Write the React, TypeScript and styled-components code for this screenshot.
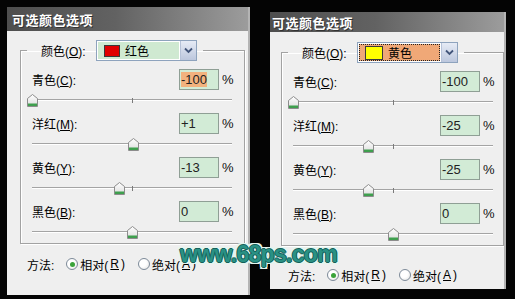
import React from "react";
import styled, { createGlobalStyle } from "styled-components";

const GlobalStyle = createGlobalStyle`
  html, body {
    margin: 0;
    padding: 0;
    background: #000;
  }
  body {
    width: 515px;
    height: 299px;
    overflow: hidden;
    font-family: "Liberation Sans", "Noto Sans CJK SC", sans-serif;
  }
`;

const cjk = `"Liberation Sans", "Noto Sans CJK SC", sans-serif`;

const Stage = styled.div`
  position: relative;
  width: 515px;
  height: 299px;
  box-sizing: border-box;
  padding: 7px 0 0 7px;
  display: flex;
  align-items: flex-start;
  gap: 20px;
  background: #040404;
  overflow: hidden;
`;

const Panel = styled.section<{ $w: number; $h: number; $mt: number }>`
  width: ${(p) => p.$w}px;
  height: ${(p) => p.$h}px;
  margin-top: ${(p) => p.$mt}px;
  flex: none;
  display: flex;
  flex-direction: column;
  background: #efefef;
  border-right: 2px solid #b4b4b4;
  box-sizing: border-box;
  overflow: hidden;
`;

const TitleBar = styled.div<{ $h: number; $pl: number }>`
  height: ${(p) => p.$h}px;
  padding-left: ${(p) => p.$pl}px;
  display: flex;
  align-items: center;
  background: linear-gradient(to right, #4e4e4e 0%, #626262 45%, #9c9c9c 100%);
  color: #fff;
  font: bold 13px ${cjk};
  letter-spacing: 0.5px;
  text-shadow: 1px 1px 0 #333;
  flex: none;
`;

const Body = styled.div<{ $pt: number; $pl: number; $pr: number }>`
  padding: ${(p) => p.$pt}px ${(p) => p.$pr}px 0 ${(p) => p.$pl}px;
  display: flex;
  flex-direction: column;
`;

const GroupBox = styled.fieldset<{ $pr: number }>`
  margin: 0;
  padding: 8px ${(p) => p.$pr}px 3px 11px;
  min-width: 0;
  border: 1px solid #a2a2a2;
  box-shadow: 1px 1px 0 #fff, inset 1px 1px 0 #fff;
  display: flex;
  flex-direction: column;
  gap: 5px;
`;

const Legend = styled.legend`
  margin-left: -5px;
  padding: 0 6px 0 14px;
  display: flex;
  align-items: center;
  height: 21px;
`;

const LegendLabel = styled.span`
  width: 55px;
  font-size: 12px;
  color: #000;
`;

const Combo = styled.div`
  width: 101px;
  height: 21px;
  box-sizing: border-box;
  border: 1px solid #8ea3bd;
  display: flex;
  background: #fff;
`;

const ComboValue = styled.div<{ $fill: string; $focus: boolean }>`
  flex: 1;
  margin: 1px;
  display: flex;
  align-items: center;
  gap: 5px;
  padding-left: 6px;
  background: ${(p) => p.$fill};
  outline: ${(p) => (p.$focus ? "1px dotted #222" : "none")};
  outline-offset: -1px;
  font-size: 12px;
  color: #000;
`;

const Swatch = styled.span<{ $c: string; $w: number; $h: number }>`
  width: ${(p) => p.$w}px;
  height: ${(p) => p.$h}px;
  box-sizing: border-box;
  background: ${(p) => p.$c};
  border: 1px solid #3a3a3a;
`;

const ComboButton = styled.div`
  width: 15px;
  display: flex;
  align-items: center;
  justify-content: center;
  background: linear-gradient(to bottom, #e6ebf5, #bcc7dd);
  border-left: 1px solid #b6c2d8;
`;

const Block = styled.div`
  display: flex;
  flex-direction: column;
`;

const ParamRow = styled.div`
  height: 21px;
  display: flex;
  align-items: center;
`;

const ParamLabel = styled.span`
  flex: 1;
  font-size: 12px;
  color: #000;
`;

const ValueBox = styled.div`
  width: 40px;
  height: 21px;
  box-sizing: border-box;
  border: 1px solid #8f9f95;
  background: #d2ebd6;
  display: flex;
  align-items: center;
  padding-left: 1px;
  font: 13px "Liberation Sans", sans-serif;
  color: #222;
`;

const Selected = styled.span`
  background: #f2b27e;
`;

const Percent = styled.span`
  width: 10px;
  margin-left: 3px;
  font: 13px "Liberation Sans", sans-serif;
  color: #111;
  white-space: nowrap;
`;

const SliderBox = styled.div`
  position: relative;
  height: 16px;
  margin-top: 2px;
  display: flex;
  align-items: center;
`;

const Track = styled.div`
  width: 100%;
  height: 0;
  border-top: 1px solid #a4a4a4;
  border-bottom: 1px solid #fff;
`;

const Tick = styled.span`
  position: absolute;
  left: 50%;
  top: 6px;
  width: 1px;
  height: 5px;
  background: #7a7a7a;
`;

const Thumb = styled.svg`
  position: absolute;
  top: 2px;
  width: 11px;
  height: 13px;
`;

const MethodRow = styled.div<{ $mt: number }>`
  margin-top: ${(p) => p.$mt}px;
  margin-left: 7px;
  height: 16px;
  display: flex;
  align-items: center;
  font-size: 12px;
  color: #000;
`;

const MethodLabel = styled.span`
  margin-right: 12px;
`;

const RadioItem = styled.label`
  display: flex;
  align-items: center;
  gap: 2px;
  margin-right: 13px;
`;

const RadioCircle = styled.span<{ $on: boolean }>`
  width: 12px;
  height: 12px;
  box-sizing: border-box;
  border-radius: 50%;
  border: 1px solid #7d8a99;
  background: radial-gradient(circle at 40% 40%, #fff 40%, #dedede 100%);
  display: flex;
  align-items: center;
  justify-content: center;
  &::after {
    content: "";
    width: 5px;
    height: 5px;
    border-radius: 50%;
    background: ${(p) => (p.$on ? "#3aa33a" : "transparent")};
  }
`;

const U = styled.span`
  text-decoration: underline;
`;

const Watermark = styled.div`
  position: absolute;
  left: 180px;
  top: 243px;
  font: bold 23px/23px "Liberation Sans", sans-serif;
  letter-spacing: -0.7px;
  color: #2a9184;
  white-space: nowrap;
  text-shadow: 1px 0 0 #14605a, -1px 0 0 #14605a, 0 1px 0 #14605a,
    0 -1px 0 #14605a, 2px 0 0 #e4f6ef, -2px 0 0 #e4f6ef, 0 2px 0 #e4f6ef,
    0 -2px 0 #e4f6ef, 2px 2px 0 #e4f6ef, -2px -2px 0 #e4f6ef,
    2px -2px 0 #e4f6ef, -2px 2px 0 #e4f6ef;
`;

interface Param {
  name: string;
  key: string;
  value: number;
  selected?: boolean;
}

interface PanelSpec {
  width: number;
  height: number;
  top: number;
  titleH: number;
  titlePad: number;
  bodyTop: number;
  bodyLeft: number;
  bodyRight: number;
  groupRight: number;
  fill: string;
  focus: boolean;
  swatch: string;
  swatchW: number;
  swatchH: number;
  colorName: string;
  methodGap: number;
  params: Param[];
}

const panels: PanelSpec[] = [
  {
    width: 243,
    height: 288,
    top: 0,
    titleH: 24,
    titlePad: 5,
    bodyTop: 9,
    bodyLeft: 13,
    bodyRight: 3,
    groupRight: 12,
    fill: "#cfe9d1",
    focus: false,
    swatch: "#e00000",
    swatchW: 16,
    swatchH: 12,
    colorName: "红色",
    methodGap: 12,
    params: [
      { name: "青色", key: "C", value: -100, selected: true },
      { name: "洋红", key: "M", value: 1 },
      { name: "黄色", key: "Y", value: -13 },
      { name: "黑色", key: "B", value: 0 },
    ],
  },
  {
    width: 236,
    height: 277,
    top: 5,
    titleH: 20,
    titlePad: 2,
    bodyTop: 10,
    bodyLeft: 11,
    bodyRight: 0,
    groupRight: 10,
    fill: "#f0a877",
    focus: true,
    swatch: "#ffff00",
    swatchW: 18,
    swatchH: 14,
    colorName: "黄色",
    methodGap: 21,
    params: [
      { name: "青色", key: "C", value: -100 },
      { name: "洋红", key: "M", value: -25 },
      { name: "黄色", key: "Y", value: -25 },
      { name: "黑色", key: "B", value: 0 },
    ],
  },
];

const formatValue = (v: number) => (v > 0 ? `+${v}` : `${v}`);

const Slider = ({ value }: { value: number }) => {
  const pct = ((value + 100) / 200) * 100;
  return (
    <SliderBox>
      <Track />
      <Tick />
      <Thumb viewBox="0 0 11 13" style={{ left: `calc(${pct}% - 5px)` }}>
        <defs>
          <linearGradient id="thumbFill" x1="0" y1="0" x2="0" y2="1">
            <stop offset="0" stopColor="#ffffff" />
            <stop offset="1" stopColor="#dcdcdc" />
          </linearGradient>
        </defs>
        <path
          d="M5.5 0.5 L10.5 4.5 L10.5 12.5 L0.5 12.5 L0.5 4.5 Z"
          fill="url(#thumbFill)"
          stroke="#8c8c8c"
        />
        <rect x="1" y="9.5" width="9" height="2.5" fill="#3f9f4e" />
      </Thumb>
    </SliderBox>
  );
};

const Dialog = ({ spec }: { spec: PanelSpec }) => (
  <Panel $w={spec.width} $h={spec.height} $mt={spec.top}>
    <TitleBar $h={spec.titleH} $pl={spec.titlePad}>
      可选颜色选项
    </TitleBar>
    <Body $pt={spec.bodyTop} $pl={spec.bodyLeft} $pr={spec.bodyRight}>
      <GroupBox $pr={spec.groupRight}>
        <Legend>
          <LegendLabel>
            颜色(<U>O</U>):
          </LegendLabel>
          <Combo>
            <ComboValue $fill={spec.fill} $focus={spec.focus}>
              <Swatch $c={spec.swatch} $w={spec.swatchW} $h={spec.swatchH} />
              {spec.colorName}
            </ComboValue>
            <ComboButton>
              <svg width="9" height="7" viewBox="0 0 9 7">
                <path
                  d="M1 1.5 L4.5 5 L8 1.5"
                  fill="none"
                  stroke="#42557a"
                  strokeWidth="1.8"
                />
              </svg>
            </ComboButton>
          </Combo>
        </Legend>
        {spec.params.map((p) => (
          <Block key={p.key}>
            <ParamRow>
              <ParamLabel>
                {p.name}(<U>{p.key}</U>):
              </ParamLabel>
              <ValueBox>
                {p.selected ? (
                  <Selected>{formatValue(p.value)}</Selected>
                ) : (
                  formatValue(p.value)
                )}
              </ValueBox>
              <Percent>%</Percent>
            </ParamRow>
            <Slider value={p.value} />
          </Block>
        ))}
      </GroupBox>
      <MethodRow $mt={spec.methodGap}>
        <MethodLabel>方法:</MethodLabel>
        <RadioItem>
          <RadioCircle $on />
          相对(<U>R</U>)
        </RadioItem>
        <RadioItem>
          <RadioCircle $on={false} />
          绝对(<U>A</U>)
        </RadioItem>
      </MethodRow>
    </Body>
  </Panel>
);

export default function App() {
  return (
    <>
      <GlobalStyle />
      <Stage>
        {panels.map((spec, i) => (
          <Dialog key={i} spec={spec} />
        ))}
        <Watermark>www.68ps.com</Watermark>
      </Stage>
    </>
  );
}
